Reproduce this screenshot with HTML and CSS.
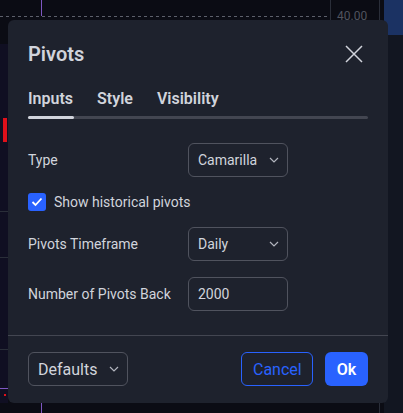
FILE: index.html
```html
<!DOCTYPE html>
<html lang="en">
<head>
    <meta charset="UTF-8">
    <title>Pivots</title>
    <link rel="stylesheet" href="styles.css">
</head>
<body>

<!-- chart behind the modal -->
<div class="chart">
    <div class="chart-top"></div>
    <div class="dots"></div>
    <div class="cursor-line top"></div>
    <div class="cursor-line bottom"></div>
    <div class="axis-line a1"></div>
    <div class="axis-line a2"></div>
    <div class="axis-line a3"></div>
    <div class="price-label">40.00</div>
    <div class="scale-blue"></div>
    <div class="scale-dark"></div>
    <div class="grid g1"></div>
    <div class="grid g2"></div>
    <div class="grid g3"></div>
    <div class="purple-line"></div>
    <div class="candle"></div>
    <div class="red-dot"></div>
</div>

<div class="dialog">
    <div class="dialog-header">
        <h2 class="dialog-title">Pivots</h2>
        <button class="close-btn" aria-label="Close">
            <svg width="18" height="18" viewBox="0 0 18 18"><path d="M1 1l16 16M17 1L1 17" stroke="#d1d4dc" stroke-width="1.5" fill="none"/></svg>
        </button>
    </div>

    <div class="tabs">
        <div class="tab-list">
            <span class="tab active">Inputs</span>
            <span class="tab">Style</span>
            <span class="tab">Visibility</span>
        </div>
        <div class="tab-track"><div class="tab-thumb"></div></div>
    </div>

    <div class="dialog-body">
        <div class="row">
            <span class="label">Type</span>
            <div class="select">
                <span>Camarilla</span>
                <svg class="chevron" width="10" height="6" viewBox="0 0 10 6"><path d="M1 1l4 4 4-4" stroke="#b2b5be" stroke-width="1.2" fill="none"/></svg>
            </div>
        </div>
        <div class="row check-row">
            <span class="checkbox">
                <svg width="12" height="10" viewBox="0 0 12 10"><path d="M1.5 5l3 3 6-6.5" stroke="#fff" stroke-width="1.8" fill="none"/></svg>
            </span>
            <span class="label">Show historical pivots</span>
        </div>
        <div class="row">
            <span class="label">Pivots Timeframe</span>
            <div class="select">
                <span>Daily</span>
                <svg class="chevron" width="10" height="6" viewBox="0 0 10 6"><path d="M1 1l4 4 4-4" stroke="#b2b5be" stroke-width="1.2" fill="none"/></svg>
            </div>
        </div>
        <div class="row">
            <span class="label">Number of Pivots Back</span>
            <div class="select">
                <span>2000</span>
            </div>
        </div>
    </div>

    <div class="dialog-footer">
        <div class="select defaults">
            <span>Defaults</span>
            <svg class="chevron" width="10" height="6" viewBox="0 0 10 6"><path d="M1 1l4 4 4-4" stroke="#b2b5be" stroke-width="1.2" fill="none"/></svg>
        </div>
        <div class="actions">
            <button class="btn btn-cancel">Cancel</button>
            <button class="btn btn-ok">Ok</button>
        </div>
    </div>
</div>

</body>
</html>
```

FILE: styles.css
```css
body {
    margin: 0;
    padding: 20px 0 0 8px;
    background-color: #0b0c14;
    font-family: Roboto, "Noto Sans", sans-serif;
    color: #d1d4dc;
    height: 413px;
    box-sizing: border-box;
    overflow: hidden;
}

/* chart pieces (free canvas) */
.chart div {
    position: absolute;
}
.chart-top {
    left: 0; top: 44px; width: 8px; height: 359px;
    background-color: #100f22;
}
.dots {
    left: 0; top: 16px; width: 330px; height: 1px;
    background-image: linear-gradient(to right, #5d606b 50%, transparent 50%);
    background-size: 6px 1px;
}
.cursor-line {
    left: 41px; width: 1px;
    background-color: #7e57c2;
}
.cursor-line.top { top: 0; height: 16px; }
.cursor-line.bottom { top: 403px; height: 10px; }
.axis-line {
    width: 1px; background-color: #2a2e39;
}
.axis-line.a1 { left: 330px; top: 0; height: 20px; }
.axis-line.a2 { left: 379px; top: 0; height: 20px; }
.axis-line.a3 { left: 379px; top: 403px; height: 10px; }
.price-label {
    left: 337px; top: 9px;
    font-size: 12px;
    color: #50535e;
}
.scale-blue {
    left: 384px; top: 0; width: 19px; height: 35px;
    background-color: #1b3263;
}
.scale-dark {
    left: 384px; top: 35px; width: 19px; height: 378px;
    background-color: #121621;
}
.grid {
    left: 0; width: 8px; height: 1px;
    background-color: #2a2e39;
}
.grid.g1 { top: 211px; }
.grid.g2 { top: 257px; }
.grid.g3 { top: 349px; }
.purple-line {
    left: 0; top: 388px; width: 8px; height: 1px;
    background-color: #7e57c2;
}
.candle {
    left: 3px; top: 118px; width: 4px; height: 24px;
    background-color: #e0101a;
}
.red-dot {
    left: 4px; top: 394px; width: 2px; height: 2px;
    background-color: #e0101a;
}

/* dialog */
.dialog {
    position: relative;
    width: 380px;
    height: 383px;
    background-color: #1e222d;
    border-radius: 6px;
    display: flex;
    flex-direction: column;
}
.dialog-header {
    display: flex;
    align-items: center;
    justify-content: space-between;
    padding: 20px 25px 0 20px;
    height: 28px;
}
.dialog-title {
    margin: 0;
    font-size: 20px;
    font-weight: 600;
    line-height: 28px;
}
.close-btn {
    background: none;
    border: none;
    padding: 0;
    width: 18px;
    height: 18px;
    display: flex;
}

.tabs {
    padding: 19px 20px 0 20px;
}
.tab-list {
    display: flex;
    gap: 24px;
}
.tab {
    font-size: 16px;
    font-weight: 600;
    line-height: 24px;
}
.tab-track {
    margin-top: 5px;
    height: 3px;
    border-radius: 2px;
    background-color: #434651;
}
.tab-thumb {
    width: 46px;
    height: 3px;
    border-radius: 2px;
    background-color: #d1d4dc;
}

.dialog-body {
    padding: 24px 20px 24px 20px;
    display: flex;
    flex-direction: column;
    gap: 16px;
    border-bottom: 1px solid #434651;
}
.row {
    display: flex;
    align-items: center;
    font-size: 14px;
}
.row .label {
    width: 160px;
}
.check-row {
    height: 18px;
}
.check-row .label {
    width: auto;
}
.checkbox {
    width: 18px;
    height: 18px;
    border-radius: 3px;
    background-color: #2962ff;
    display: flex;
    align-items: center;
    justify-content: center;
    margin-right: 8px;
}

.select {
    box-sizing: border-box;
    width: 100px;
    height: 34px;
    border: 1px solid #50535e;
    border-radius: 6px;
    padding: 0 8px 0 9px;
    display: flex;
    align-items: center;
    justify-content: space-between;
    font-size: 14px;
}

.dialog-footer {
    display: flex;
    justify-content: space-between;
    padding: 16px 20px;
}
.defaults {
    font-size: 16px;
}
.actions {
    display: flex;
    gap: 12px;
}
.btn {
    height: 34px;
    border-radius: 6px;
    font-family: inherit;
    font-size: 16px;
    padding: 0 11px;
    cursor: pointer;
}
.btn-cancel {
    background: none;
    border: 1px solid #2962ff;
    color: #2962ff;
    width: 72px;
}
.btn-ok {
    background-color: #2962ff;
    border: none;
    color: #fff;
    font-weight: 600;
    width: 43px;
}
```
